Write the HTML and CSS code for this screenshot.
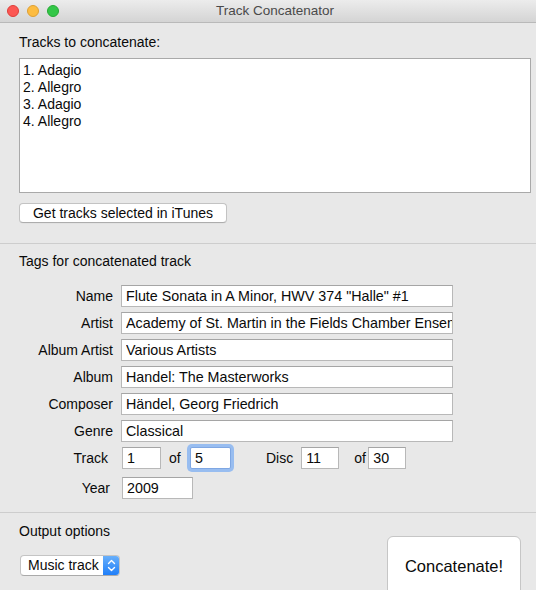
FILE: index.html
```html
<!DOCTYPE html>
<html>
<head>
<meta charset="utf-8">
<title>Track Concatenator</title>
<link rel="stylesheet" href="styles.css">
</head>
<body>
<div class="window">
  <header class="titlebar">
    <div class="lights">
      <span class="light red"></span>
      <span class="light yellow"></span>
      <span class="light green"></span>
    </div>
    <div class="title">Track Concatenator</div>
  </header>

  <section class="tracks">
    <div class="label">Tracks to concatenate:</div>
    <div class="listbox">
      <div class="item">1. Adagio</div>
      <div class="item">2. Allegro</div>
      <div class="item">3. Adagio</div>
      <div class="item">4. Allegro</div>
    </div>
    <button class="btn get">Get tracks selected in iTunes</button>
  </section>

  <section class="tags">
    <div class="label">Tags for concatenated track</div>
    <div class="form">
      <label class="flabel">Name</label><input class="field" value="Flute Sonata in A Minor, HWV 374 &quot;Halle&quot; #1">
      <label class="flabel">Artist</label><input class="field" value="Academy of St. Martin in the Fields Chamber Ensemble">
      <label class="flabel">Album Artist</label><input class="field" value="Various Artists">
      <label class="flabel">Album</label><input class="field" value="Handel: The Masterworks">
      <label class="flabel">Composer</label><input class="field" value="Händel, Georg Friedrich">
      <label class="flabel">Genre</label><input class="field" value="Classical">
    </div>
    <div class="track-row">
      <label class="tlabel">Track</label>
      <input class="field num n1" value="1">
      <span class="of">of</span>
      <input class="field num n2 focus" value="5">
      <span class="disc">Disc</span>
      <input class="field num n3" value="11">
      <span class="of of2">of</span>
      <input class="field num n4" value="30">
    </div>
    <div class="year-row">
      <label class="ylabel">Year</label>
      <input class="field year" value="2009">
    </div>
  </section>

  <section class="output">
    <div class="out-left">
      <div class="label">Output options</div>
      <div class="popup">
        <span class="popup-text">Music track</span>
        <span class="stepper">
          <svg width="17" height="21" viewBox="0 0 17 21">
            <path d="M5.5 8.5 L8.5 5.5 L11.5 8.5" fill="none" stroke="#fff" stroke-width="1.4" stroke-linecap="round" stroke-linejoin="round"/>
            <path d="M5.5 12.5 L8.5 15.5 L11.5 12.5" fill="none" stroke="#fff" stroke-width="1.4" stroke-linecap="round" stroke-linejoin="round"/>
          </svg>
        </span>
      </div>
    </div>
    <button class="btn concat">Concatenate!</button>
  </section>
</div>
</body>
</html>
```

FILE: styles.css
```css
* { box-sizing: border-box; }

html, body {
  margin: 0;
  padding: 0;
}

body {
  width: 536px;
  height: 590px;
  overflow: hidden;
  background: #e8e8e8;
  font-family: "Liberation Sans", Arial, sans-serif;
  font-size: 14px;
  color: #0a0a0a;
}

.window {
  width: 536px;
  height: 590px;
  background: #e8e8e8;
}

.titlebar {
  height: 23px;
  display: flex;
  align-items: center;
  background: linear-gradient(#ececec, #d4d4d4);
  border-bottom: 1px solid #b9b9b9;
  position: relative;
}

.lights {
  display: flex;
  gap: 8px;
  padding-left: 7px;
  position: absolute;
  top: 5px;
  left: 0;
}

.light {
  width: 12px;
  height: 12px;
  border-radius: 50%;
  display: block;
}
.red { background: #fc5753; border: 1px solid #de3f3a; }
.yellow { background: #fdbc40; border: 1px solid #dea034; }
.green { background: #33c748; border: 1px solid #27aa35; }

.title {
  flex: 1;
  text-align: center;
  padding-left: 14px;
  font-size: 13.5px;
  color: #4a4a4a;
  line-height: 22px;
}

.label {
  line-height: 16px;
}

.tracks {
  padding: 11px 5px 0 19px;
  border-bottom: 1px solid #cdcdcd;
  padding-bottom: 20px;
}

.listbox {
  margin-top: 8px;
  height: 135px;
  background: #fff;
  border: 1px solid #a9a9a9;
  padding: 3px 3px;
}

.item {
  line-height: 17px;
}

.btn {
  font-family: inherit;
  font-size: inherit;
  color: #0a0a0a;
  background: #fff;
  border: 1px solid #c3c3c3;
  border-bottom-color: #adadad;
  border-radius: 4px;
  padding: 0;
  box-shadow: 0 0.5px 0 rgba(0,0,0,0.05);
}

.get {
  margin-top: 10px;
  width: 208px;
  height: 20px;
  line-height: 18px;
  display: block;
}

.tags {
  padding: 9px 0 13px 19px;
  border-bottom: 1px solid #cdcdcd;
}

.form {
  margin-top: 16px;
  margin-left: -19px;
  display: grid;
  grid-template-columns: 113px 332px;
  column-gap: 8px;
  row-gap: 5px;
}

.flabel, .tlabel, .ylabel {
  text-align: right;
  line-height: 22px;
}

.field {
  font-family: inherit;
  font-size: 14.3px;
  color: #0a0a0a;
  height: 22px;
  background: #fff;
  border: 1px solid #b8b8b8;
  border-top-color: #a5a5a5;
  border-radius: 0;
  padding: 0 0 0 4px;
  margin: 0;
  outline: none;
}

.track-row {
  margin-top: 5px;
  margin-left: -19px;
  display: flex;
  align-items: center;
}

.tlabel { width: 108px; }

.num { width: 39px; }
.n1 { margin-left: 14px; }
.of { margin-left: 8px; width: 12px; }
.n2 {
  margin-left: 9px;
  width: 41px;
  border-color: #7fa7e3;
  border-radius: 2px;
  box-shadow: 0 0 0 3px #98bdf0;
}
.disc { margin-left: 35px; }
.n3 { margin-left: 8px; width: 38px; }
.of2 { margin-left: 15px; }
.n4 { margin-left: 2px; width: 38px; }

.year-row {
  margin-top: 8px;
  margin-left: -19px;
  display: flex;
  align-items: center;
}
.ylabel { width: 110px; }
.year { margin-left: 12px; width: 71px; }

.output {
  display: flex;
  justify-content: space-between;
  align-items: flex-start;
  padding: 0 15px 0 19px;
}

.out-left {
  padding-top: 10px;
}

.popup {
  margin-top: 16px;
  margin-left: 1px;
  width: 100px;
  height: 21px;
  display: flex;
  background: #fff;
  border: 1px solid #c4c4c4;
  border-bottom-color: #aaaaaa;
  border-radius: 4px;
  overflow: hidden;
}

.popup-text {
  flex: 1;
  padding-left: 7px;
  line-height: 19px;
}

.stepper {
  width: 17px;
  margin: -1px -1px -1px 0;
  height: 21px;
  background: linear-gradient(#6cb2fb, #1c7cf8);
  display: block;
}
.stepper svg { display: block; }

.concat {
  margin-top: 23px;
  width: 134px;
  height: 72px;
  font-size: 16.5px;
  border-color: #c6c6c6;
  border-radius: 6px;
  padding-bottom: 12px;
}
```
